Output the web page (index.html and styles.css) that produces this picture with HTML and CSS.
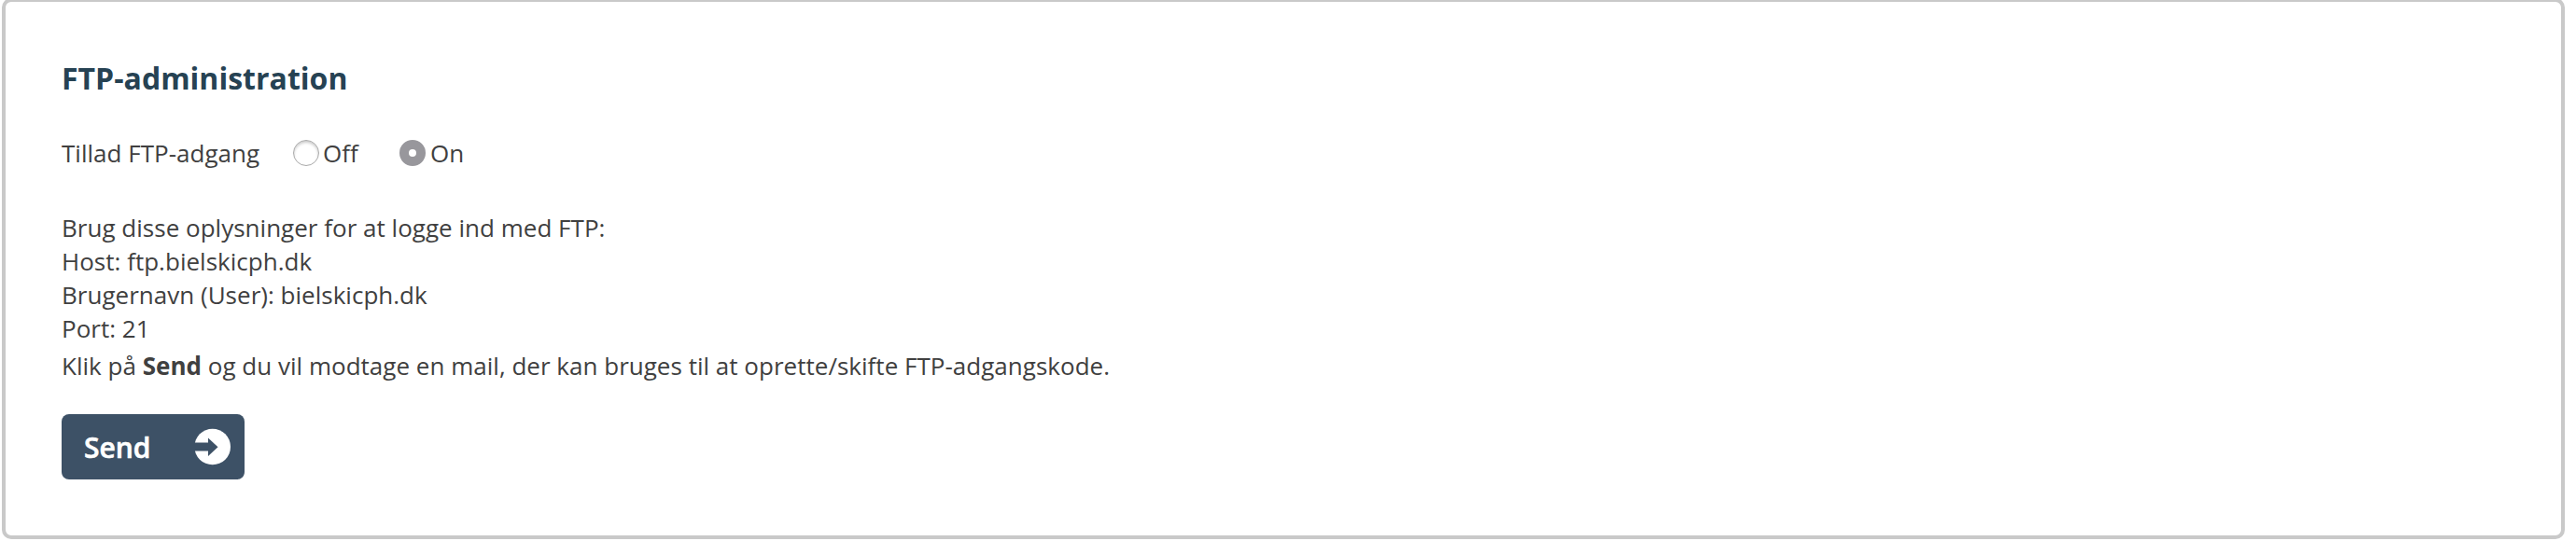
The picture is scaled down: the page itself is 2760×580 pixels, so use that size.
FILE: index.html
```html
<!DOCTYPE html>
<html lang="da">
<head>
<meta charset="utf-8">
<title>FTP-administration</title>
<link rel="stylesheet" href="styles.css">
</head>
<body>
<main class="panel">
  <h1 class="title">FTP-administration</h1>
  <div class="access">
    <span class="access-label">Tillad FTP-adgang</span>
    <label class="option option-off"><span class="radio"></span>Off</label>
    <label class="option"><span class="radio radio-on"></span>On</label>
  </div>
  <div class="info">
    <p>Brug disse oplysninger for at logge ind med FTP:</p>
    <p>Host: ftp.bielskicph.dk</p>
    <p>Brugernavn (User): bielskicph.dk</p>
    <p>Port: 21</p>
  </div>
  <p class="hint">Klik på <b>Send</b> og du vil modtage en mail, der kan bruges til at oprette/skifte FTP-adgangskode.</p>
  <button class="send" type="button">Send
    <svg class="arrow" viewBox="0 0 40 40"><circle cx="19.7" cy="20" r="19.3" fill="#fff"/><path d="M0 15.5H15V10.5L25.5 20.3L15 30V24.5H0Z" fill="#3d5166"/></svg>
  </button>
</main>
</body>
</html>
```
FILE: styles.css
```css
* { box-sizing: border-box; }
html { height: 580px; overflow: hidden; }
body { margin: 0; height: 580px; display: flow-root; background: #fff; font-family: "Open Sans", sans-serif; font-size: 26px; line-height: 36px; letter-spacing: 0.015px; color: #404040; }
p { margin: 0; }
.panel { margin: -2px 12px 0 2px; height: 580px; padding: 62px 60px 0; border: 4px solid #c9c9c9; border-radius: 10px; }
.title { margin: 0; font-size: 32px; line-height: 40px; font-weight: 700; color: #264253; }
.access { display: flex; align-items: center; height: 36px; margin-top: 42px; }
.access-label { width: 248px; }
.option { display: flex; align-items: center; gap: 5px; }
.option-off { width: 114px; gap: 4px; }
.radio { width: 28px; height: 28px; border: 1px solid #aaa; border-radius: 50%; background: #fff; box-shadow: inset 0 2px 3px #ccc; }
.radio-on { border: 10px solid #98979c; box-shadow: none; }
.info { margin-top: 44px; }
.hint { margin-top: 4px; }
.send { display: flex; align-items: center; justify-content: space-between; width: 196px; height: 70px; margin-top: 34px; padding: 0 14px 0 24px; border: 0; border-radius: 8px; background: #3d5166; color: #fff; font: 600 30px "Open Sans", sans-serif; -webkit-text-stroke: 0.6px #fff; }
.arrow { width: 40px; height: 40px; }
```
